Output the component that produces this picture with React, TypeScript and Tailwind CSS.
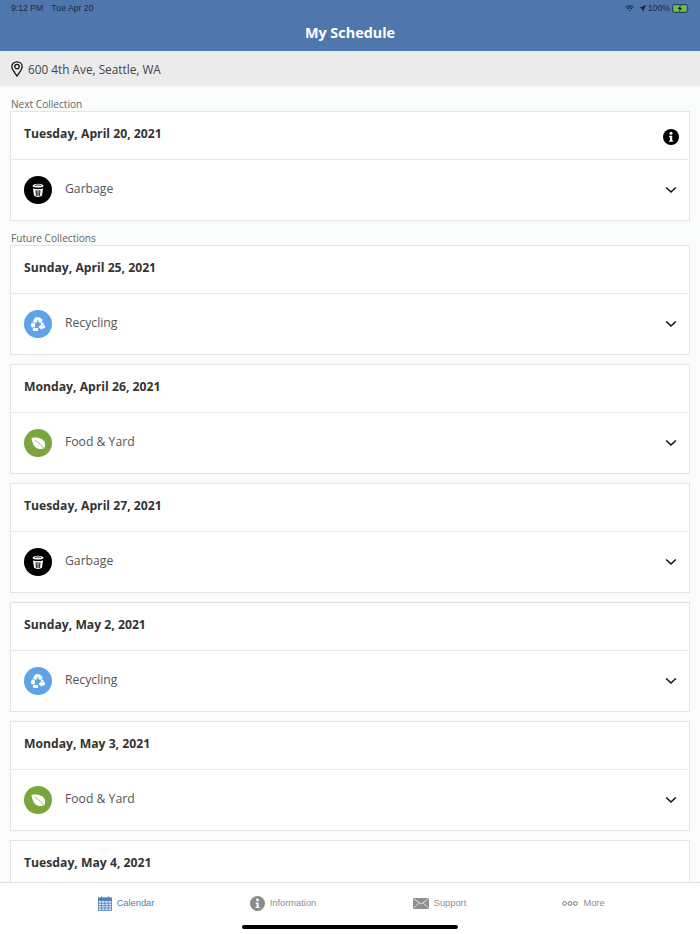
import React from "react";

const Trash = () => (
  <svg width="14" height="16" viewBox="0 0 16 18" fill="none">
    <path d="M1.6 4.4 C3 1 13 1 14.4 4.4 C13 6.8 3 6.8 1.6 4.4Z" fill="#fff" />
    <path d="M4.4 4 C6 3 10 3 11.6 4" stroke="#000" strokeWidth="1" />
    <path d="M2.2 7 C4.5 8.4 11.5 8.4 13.8 7 L12.6 15.4 C11 17.4 5 17.4 3.4 15.4Z" fill="#fff" />
    <path d="M5.8 9.2 L6.2 15.6 M8 9.4 V15.9 M10.2 9.2 L9.8 15.6" stroke="#000" strokeWidth="1.1" />
  </svg>
);

const Recycle = () => (
  <svg width="16" height="16" viewBox="0 0 18 18" fill="#fff">
    <path d="M6.6 1.4 H10.6 C11.2 1.4 11.7 1.7 12 2.2 L13 4 L14.5 3.2 L13.2 8 L8.6 6.8 L10.1 6 L9 4.2 L6.6 8.2 L3.2 6.2 L5.2 2.4 C5.5 1.8 6 1.4 6.6 1.4Z" />
    <path d="M14.4 7.2 L16.8 11.4 C17.4 12.6 16.7 14 15.2 14 H13 V15.8 L9.6 12.4 L13 9 V10.8 H15.2 L11.6 8.8Z" />
    <path d="M2.6 7 L5.8 8.8 L5.2 13.4 L3.8 12 L2.6 13.6 L1.2 11.2 C0.8 10.4 0.9 9.8 1.3 9.2Z" />
    <path d="M4.6 13.6 H9 V17 H5 C3.4 17 2.6 15.6 3.3 14.4Z" />
  </svg>
);

const Leaf = () => (
  <svg width="17" height="17" viewBox="0 0 18 18">
    <path d="M1.5 3.2 C7 2 13.5 3 15.6 8 C16.6 10.6 15.8 13 15 14.4 C11 15.6 6.5 14.6 4.2 11 C2.8 8.8 2 5.6 1.5 3.2Z" fill="#fff" />
    <path d="M5 5.5 C8.5 7.5 12 11 16.5 16.2" stroke="#7ba63e" strokeWidth="0.8" fill="none" />
  </svg>
);

const Chevron = () => (
  <svg width="12" height="8" viewBox="0 0 12 8" fill="none">
    <path d="M1.2 1.5 L6 6 L10.8 1.5" stroke="#111" strokeWidth="1.6" />
  </svg>
);

const InfoDot = ({ size, color }: { size: number; color: string }) => (
  <svg width={size} height={size} viewBox="0 0 16 16" className="shrink-0">
    <circle cx="8" cy="8" r="8" fill={color} />
    <circle cx="8" cy="4.2" r="1.5" fill="#fff" />
    <path d="M6.1 6.8 H9.2 V11.4 H10.2 V12.8 H6 V11.4 H7 V8.2 H6.1Z" fill="#fff" />
  </svg>
);

const kinds = {
  g: { label: "Garbage", bg: "bg-black", icon: <Trash /> },
  r: { label: "Recycling", bg: "bg-[#5fa2e6]", icon: <Recycle /> },
  f: { label: "Food & Yard", bg: "bg-[#7ba63e]", icon: <Leaf /> },
};

function Card({ date, kind, info }: { date: string; kind?: "g" | "r" | "f"; info?: boolean }) {
  const k = kind ? kinds[kind] : null;
  return (
    <div className="border border-[#e3e4e4] bg-white">
      <div className="h-[48px] flex items-center justify-between pl-[13px] pr-[10.5px] border-b border-[#e8e8e8]">
        <span className="font-bold text-[12.2px] text-[#333] relative top-[-1px]">{date}</span>
        {info && (
          <span className="relative top-[1px]">
            <InfoDot size={16} color="#000" />
          </span>
        )}
      </div>
      {k && (
        <div className="h-[60px] flex items-center pl-[13px] pr-[12.5px]">
          <div className={`w-[28px] h-[28px] rounded-full flex items-center justify-center ${k.bg}`}>{k.icon}</div>
          <span className="ml-[13px] text-[12.2px] text-[#555] relative top-[-0.5px]">{k.label}</span>
          <span className="ml-auto flex">
            <Chevron />
          </span>
        </div>
      )}
    </div>
  );
}

function Tab({ icon, label, active, className }: { icon: React.ReactNode; label: string; active?: boolean; className: string }) {
  return (
    <div className={`flex items-center gap-[5px] ${className}`}>
      {icon}
      <span className={`text-[9.3px] relative top-[0.5px] whitespace-nowrap ${active ? "text-[#4f7fbd]" : "text-[#8e8e8e]"}`}>{label}</span>
    </div>
  );
}

export default function App() {
  return (
    <div className="w-[700px] h-[934px] flex flex-col overflow-hidden bg-[#fafbfb] font-['Open_Sans',sans-serif]">
      <header className="h-[51px] shrink-0 bg-[#4f77ab] relative">
        <div className="h-[17px] flex items-center justify-between pl-[11px] pr-[10px] pt-[1px] font-['Liberation_Sans',sans-serif] text-[8.7px] text-[#1b2a3f]">
          <div className="flex gap-[8px]">
            <span>9:12 PM</span>
            <span>Tue Apr 20</span>
          </div>
          <div className="flex items-center gap-[2px]">
            <svg width="9" height="7" viewBox="0 0 10 8" fill="none" stroke="#14233a" strokeWidth="1.2">
              <path d="M0.6 2.6 C3 0.4 7 0.4 9.4 2.6" />
              <path d="M2.2 4.3 C3.8 3 6.2 3 7.8 4.3" />
              <path d="M3.9 6 C4.5 5.5 5.5 5.5 6.1 6 L5 7.2Z" fill="#14233a" stroke="none" />
            </svg>
            <svg width="7" height="7" viewBox="0 0 7 7" className="ml-[3px]">
              <path d="M7 0 L4 7 L3.2 3.8 L0 3Z" fill="#14233a" />
            </svg>
            <span>100%</span>
            <svg width="18" height="9" viewBox="0 0 18 9" fill="none">
              <rect x="0.5" y="0.5" width="15" height="8" rx="2" stroke="#2b4060" />
              <rect x="1.5" y="1.5" width="13" height="6" rx="1" fill="#6cc04a" />
              <path d="M16.5 3 V6 C17.3 5.7 17.3 3.3 16.5 3Z" fill="#2b4060" />
              <path d="M8.8 1 L5.8 5 H7.6 L7 8 L10 4 H8.2Z" fill="#111" />
            </svg>
          </div>
        </div>
        <h1 className="text-center text-white font-bold text-[14.4px] leading-[20px] mt-[6px]">My Schedule</h1>
      </header>

      <div className="h-[35px] shrink-0 bg-[#ebebeb] flex items-center pl-[11px] gap-[5px]">
        <svg width="12" height="16" viewBox="0 0 12 16" fill="none" stroke="#111" strokeWidth="1.3">
          <path d="M6 15 C3.5 11.5 0.8 8.6 0.8 5.6 C0.8 2.8 3.1 0.8 6 0.8 C8.9 0.8 11.2 2.8 11.2 5.6 C11.2 8.6 8.5 11.5 6 15Z" />
          <circle cx="6" cy="5.6" r="2.2" />
        </svg>
        <span className="text-[11.8px] text-[#444] relative top-[1.5px]">600 4th Ave, Seattle, WA</span>
      </div>

      <main className="flex-1 overflow-hidden px-[10px]">
        <div className="text-[10.1px] leading-[14px] text-[#666] pt-[11px] pl-[1px]">Next Collection</div>
        <Card date="Tuesday, April 20, 2021" kind="g" info />
        <div className="text-[10.1px] leading-[14px] text-[#666] pt-[10px] pl-[1px]">Future Collections</div>
        <div className="flex flex-col gap-[9px]">
          <Card date="Sunday, April 25, 2021" kind="r" />
          <Card date="Monday, April 26, 2021" kind="f" />
          <Card date="Tuesday, April 27, 2021" kind="g" />
          <Card date="Sunday, May 2, 2021" kind="r" />
          <Card date="Monday, May 3, 2021" kind="f" />
          <Card date="Tuesday, May 4, 2021" />
        </div>
      </main>

      <footer className="h-[52px] shrink-0 bg-white border-t border-[#e2e2e2] relative font-['Liberation_Sans',sans-serif]">
        <div className="h-[40px] flex items-center">
          <Tab
            active
            className="w-[252px] justify-center"
            label="Calendar"
            icon={
              <svg width="14" height="15" viewBox="0 0 14 15" fill="none" stroke="#4f7fbd" strokeWidth="0.8">
                <rect x="0.5" y="2" width="13" height="12.5" fill="#dce7f5" />
                <rect x="0.5" y="2" width="13" height="2.6" fill="#4f7fbd" />
                <path d="M3.5 0.5 V3 M10.5 0.5 V3" strokeWidth="1.2" />
                <path d="M0.5 7.2 H13.5 M0.5 9.6 H13.5 M0.5 12 H13.5 M3.7 4.6 V14.5 M7 4.6 V14.5 M10.3 4.6 V14.5" />
              </svg>
            }
          />
          <Tab className="w-[62px] justify-center" label="Information" icon={<InfoDot size={15} color="#8a8a8a" />} />
          <Tab
            className="w-[215px] justify-center pl-[36px]"
            label="Support"
            icon={
              <svg width="16" height="11" viewBox="0 0 16 11" className="shrink-0">
                <rect width="16" height="11" fill="#8e8e8e" />
                <path d="M0.3 0.5 L8 6 L15.7 0.5 M0.3 10.5 L6 4.8 M15.7 10.5 L10 4.8" stroke="#fff" strokeWidth="0.7" fill="none" />
              </svg>
            }
          />
          <Tab
            className="w-[87px] justify-center pl-[22px]"
            label="More"
            icon={
              <svg width="16" height="5" viewBox="0 0 16 5" fill="none" stroke="#777" strokeWidth="1" className="shrink-0">
                <circle cx="2.6" cy="2.5" r="1.9" />
                <circle cx="8" cy="2.5" r="1.9" />
                <circle cx="13.4" cy="2.5" r="1.9" />
              </svg>
            }
          />
        </div>
        <div className="absolute left-[242px] bottom-[5px] w-[216px] h-[4px] rounded-full bg-black" />
      </footer>
    </div>
  );
}
